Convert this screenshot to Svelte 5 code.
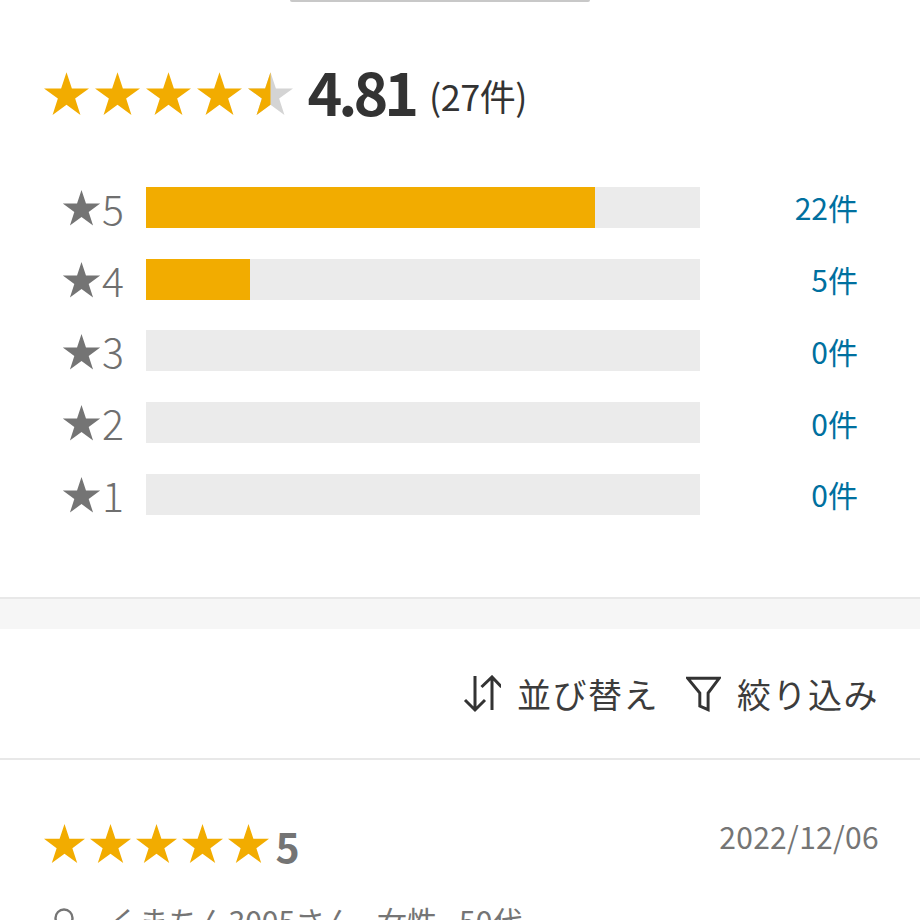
<script lang="ts">
	const bars = [
		{ star: 5, pct: 81, label: '22件' },
		{ star: 4, pct: 18.9, label: '5件' },
		{ star: 3, pct: 0, label: '0件' },
		{ star: 2, pct: 0, label: '0件' },
		{ star: 1, pct: 0, label: '0件' }
	];
	const star = 'M12 0.6l2.75 8.3h8.75l-7.08 5.2 2.7 8.4L12 17.3l-7.12 5.2 2.7-8.4L0.5 8.9h8.75z';
</script>

<div class="page">
	<div class="handle"></div>

	<section class="summary">
		<div class="stars big">
			{#each [0, 1, 2, 3] as i (i)}
				<svg viewBox="0 0 24 23" class="bigstar"><path d={star} fill="#f2ac00" /></svg>
			{/each}
			<svg viewBox="0 0 24 23" class="bigstar">
				<path d={star} fill="#d4d4d4" />
				<path d={star} fill="#f2ac00" style="clip-path: inset(0 50% 0 0)" />
			</svg>
		</div>
		<span class="score">4.81</span>
		<span class="count">(27件)</span>
	</section>

	<section class="bars">
		{#each bars as b (b.star)}
			<div class="row">
				<span class="rowlabel">
					<svg viewBox="0 0 24 23" class="rowstar"><path d={star} fill="#747474" /></svg>{b.star}
				</span>
				<div class="track"><div class="fill" style="width: {b.pct}%"></div></div>
				<span class="num">{b.label}</span>
			</div>
		{/each}
	</section>

	<div class="band"></div>

	<div class="tools">
		<button class="tool">
			<svg viewBox="0 0 38 38" class="ic" fill="none" stroke="#333" stroke-width="3">
				<path d="M12 1v34M2 25l10 10 10-10" />
				<path d="M29 35V2M18.500 12 29 2l9.500 10" />
			</svg>
			並び替え
		</button>
		<button class="tool filter">
			<svg viewBox="0 0 38 38" class="ic fil" fill="none" stroke="#333" stroke-width="3.2" stroke-linejoin="miter">
				<path d="M2 2h34L24 18v18l-9-4V18z" />
			</svg>
			絞り込み
		</button>
	</div>

	<article class="review">
		<div class="reviewhead">
			<div class="stars small">
				{#each [0, 1, 2, 3, 4] as i (i)}
					<svg viewBox="0 0 24 23" class="smallstar"><path d={star} fill="#f2ac00" /></svg>
				{/each}
				<span class="reviewscore">5</span>
			</div>
			<span class="date">2022/12/06</span>
		</div>
		<div class="author">
			<svg viewBox="0 0 30 44" class="person" fill="none" stroke="#757575" stroke-width="2.400">
				<circle cx="15" cy="10" r="8.500" />
				<path d="M3 42c0-12 5-19 12-19s12 7 12 19" />
			</svg>
			<span>くまちん3005さん</span>
			<span>女性</span>
			<span>50代</span>
		</div>
	</article>
</div>

<style>
	:global(body) {
		margin: 0;
		background: #fff;
	}

	.page {
		width: 920px;
		height: 920px;
		overflow: hidden;
		font-family: 'Noto Sans CJK JP', 'Noto Sans', sans-serif;
		color: #333;
	}

	.handle {
		width: 300px;
		height: 2px;
		margin-left: 290px;
		background: #c8c8c8;
		border-radius: 0 0 3px 3px;
	}

	.summary {
		display: flex;
		align-items: center;
		height: 128px;
		margin-top: 27px;
		padding-left: 42.500px;
		box-sizing: border-box;
	}

	.stars {
		display: flex;
	}

	.big {
		gap: 4px;
	}

	.bigstar {
		width: 47px;
		height: 45px;
		display: block;
	}

	.score {
		margin-left: 14px;
		margin-top: -5px;
		font-size: 59px;
		font-weight: 700;
		line-height: 1;
		letter-spacing: -4px;
	}

	.count {
		margin-left: 14px;
		margin-top: 4px;
		font-size: 36px;
		font-weight: 400;
		letter-spacing: -0.500px;
		line-height: 1;
	}

	.bars {
		display: flex;
		flex-direction: column;
		gap: 30.750px;
		margin-top: 29.750px;
	}

	.row {
		display: flex;
		align-items: center;
		height: 41px;
	}

	.rowlabel {
		display: flex;
		align-items: center;
		justify-content: flex-end;
		width: 124px;
		font-size: 41px;
		line-height: 1;
		font-weight: 300;
		color: #6f6f6f;
	}

	.rowstar {
		width: 39px;
		height: 37.400px;
		margin-top: 1px;
		margin-right: 1px;
	}

	.track {
		width: 554.500px;
		height: 41px;
		margin-left: 21.500px;
		background: #ebebeb;
	}

	.fill {
		height: 100%;
		background: #f2ac00;
	}

	.num {
		width: 158px;
		text-align: right;
		font-size: 30px;
		color: #00709f;
		font-weight: 400;
	}

	.band {
		height: 30px;
		margin-top: 82.250px;
		background: #f6f6f6;
		border-top: 2px solid #e8e8e8;
	}

	.tools {
		display: flex;
		justify-content: flex-end;
		align-items: center;
		height: 129px;
		padding-right: 41px;
		border-bottom: 2px solid #e8e8e8;
		gap: 27px;
	}

	.tool {
		display: flex;
		align-items: center;
		gap: 16px;
		padding: 0;
		border: 0;
		background: none;
		font: inherit;
		font-size: 34px;
		font-weight: 400;
		letter-spacing: 1.500px;
		color: #3c3c3c;
	}

	.ic {
		width: 38px;
		height: 38px;
	}

	.fil {
		width: 35px;
	}

	.review {
		padding: 0 41px 0 42.500px;
	}

	.reviewhead {
		display: flex;
		justify-content: space-between;
		align-items: center;
		margin-top: 60px;
	}

	.small {
		align-items: center;
		gap: 3px;
	}

	.smallstar {
		width: 43px;
		height: 41px;
		display: block;
	}

	.reviewscore {
		margin-left: 3px;
		margin-top: 5px;
		font-size: 41px;
		font-weight: 700;
		line-height: 1;
		color: #747474;
	}

	.date {
		font-size: 30px;
		letter-spacing: 0.300px;
		color: #757575;
		margin-top: -15px;
	}

	.author {
		display: flex;
		align-items: flex-start;
		gap: 22px;
		margin-top: 32px;
		padding-left: 6px;
		font-size: 30px;
		font-weight: 400;
		color: #757575;
	}

	.person {
		width: 30px;
		height: 44px;
		margin-top: 10px;
		margin-right: 8px;
	}
</style>
